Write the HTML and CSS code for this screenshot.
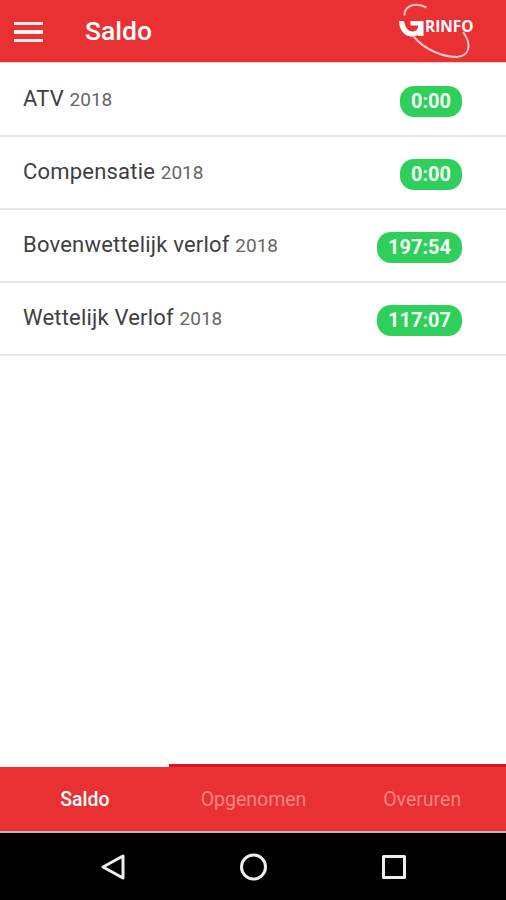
FILE: index.html
```html
<!DOCTYPE html>
<html lang="nl">
<head>
    <meta charset="UTF-8">
    <meta name="viewport" content="width=device-width, initial-scale=1.0">
    <title>Saldo</title>
    <link rel="stylesheet" href="styles.css">
</head>
<body>
    <header class="toolbar">
        <button class="menu" aria-label="Menu"><span></span><span></span><span></span></button>
        <h1>Saldo</h1>
        <svg class="logo" viewBox="0 0 80 62" width="80" height="62">
            <path class="swoosh" d="M8.5 15.5C8 7 18 1 30.5 7.500"/>
            <path class="swoosh" d="M18 37C28 49 46 57 61 57C74 56 76 44 67 32"/>
            <path class="hook" d="M3 21L8 21C9 28 13 32 17 31.500C21 31 22 29 22 25.500L14.500 25.500L14.500 21L27.500 21L27.500 36L22 36L22 35C13 40 3 33 3 21Z"/>
            <text x="29" y="32" textLength="48.500" lengthAdjust="spacingAndGlyphs">RINFO</text>
        </svg>
    </header>

    <main class="list">
        <div class="item">
            <p>ATV <small>2018</small></p>
            <span class="badge">0:00</span>
        </div>
        <div class="item">
            <p>Compensatie <small>2018</small></p>
            <span class="badge">0:00</span>
        </div>
        <div class="item">
            <p>Bovenwettelijk verlof <small>2018</small></p>
            <span class="badge">197:54</span>
        </div>
        <div class="item">
            <p>Wettelijk Verlof <small>2018</small></p>
            <span class="badge">117:07</span>
        </div>
    </main>

    <nav class="tabs">
        <a class="tab active">Saldo</a>
        <a class="tab">Opgenomen</a>
        <a class="tab">Overuren</a>
    </nav>

    <footer class="android-nav">
        <svg viewBox="0 0 30 30" width="30" height="30"><path d="M24 4V26L4 15Z"/></svg>
        <svg viewBox="0 0 30 30" width="30" height="30"><circle cx="14.500" cy="15" r="12"/></svg>
        <svg viewBox="0 0 30 30" width="30" height="30"><rect x="4.500" y="4.500" width="21" height="21"/></svg>
    </footer>
</body>
</html>
```

FILE: styles.css
```css
* {
    box-sizing: border-box;
}
body {
    display: flex;
    flex-direction: column;
    height: 100vh;
    margin: 0;
    background-color: #fff;
    font-family: Roboto, sans-serif;
}

/* Header */
.toolbar {
    display: flex;
    align-items: center;
    height: 62px;
    padding: 0 30px 0 14px;
    background-color: #e93033;
    box-shadow: 0 1px 0 #f5c9ca;
}
.menu {
    display: flex;
    flex-direction: column;
    gap: 5px;
    width: 29px;
    margin: 2px 42px 0 0;
    padding: 0;
    border: none;
    background: none;
}
.menu span {
    height: 3.500px;
    background-color: #fff0ee;
}
.toolbar h1 {
    margin: 0;
    color: #fff;
    font-size: 26.500px;
    font-weight: 500;
    line-height: 60px;
}
.logo {
    margin-left: auto;
}
.logo .swoosh {
    fill: none;
    stroke: #ffc9c5;
    stroke-width: 2;
}
.logo .hook {
    fill: #fff;
}
.logo text {
    fill: #fff;
    font-family: "Open Sans", sans-serif;
    font-size: 16.500px;
    font-weight: 700;
}

/* Saldo list */
.list {
    flex: 1;
    padding-top: 2px;
}
.item {
    display: flex;
    justify-content: space-between;
    align-items: center;
    height: 73px;
    padding: 0 44px 0 23px;
    border-bottom: 2px solid #e7e7e7;
}
.item p {
    margin: 0;
    padding-bottom: 2px;
    color: #404040;
    font-size: 22px;
    font-weight: 400;
    letter-spacing: 0.2px;
}
.item small {
    color: #666;
    font-size: 19px;
    letter-spacing: 0;
}
.badge {
    height: 31px;
    margin-top: 4px;
    padding: 0 11px;
    border-radius: 14px;
    background-color: #2fcf5c;
    color: #f4fff4;
    font-size: 20px;
    font-weight: 700;
    line-height: 30px;
}

/* Bottom tabs */
.tabs {
    display: flex;
    height: 69px;
    border-bottom: 2px solid #c9b5b5;
}
.tab {
    flex: 1;
    border-top: 3px solid #d5161a;
    background-color: #e93033;
    color: #ff8580;
    font-size: 19.500px;
    line-height: 66px;
    text-align: center;
    text-indent: 1px;
}
.tab.active {
    border-top-color: #fff;
    color: #fff;
    font-weight: 500;
}

/* System buttons */
.android-nav {
    display: flex;
    justify-content: center;
    gap: 110px;
    height: 67px;
    padding: 19px 0 0 1px;
    background-color: #000;
}
.android-nav svg {
    fill: none;
    stroke: #eee;
    stroke-width: 3;
    stroke-linejoin: round;
}
```
